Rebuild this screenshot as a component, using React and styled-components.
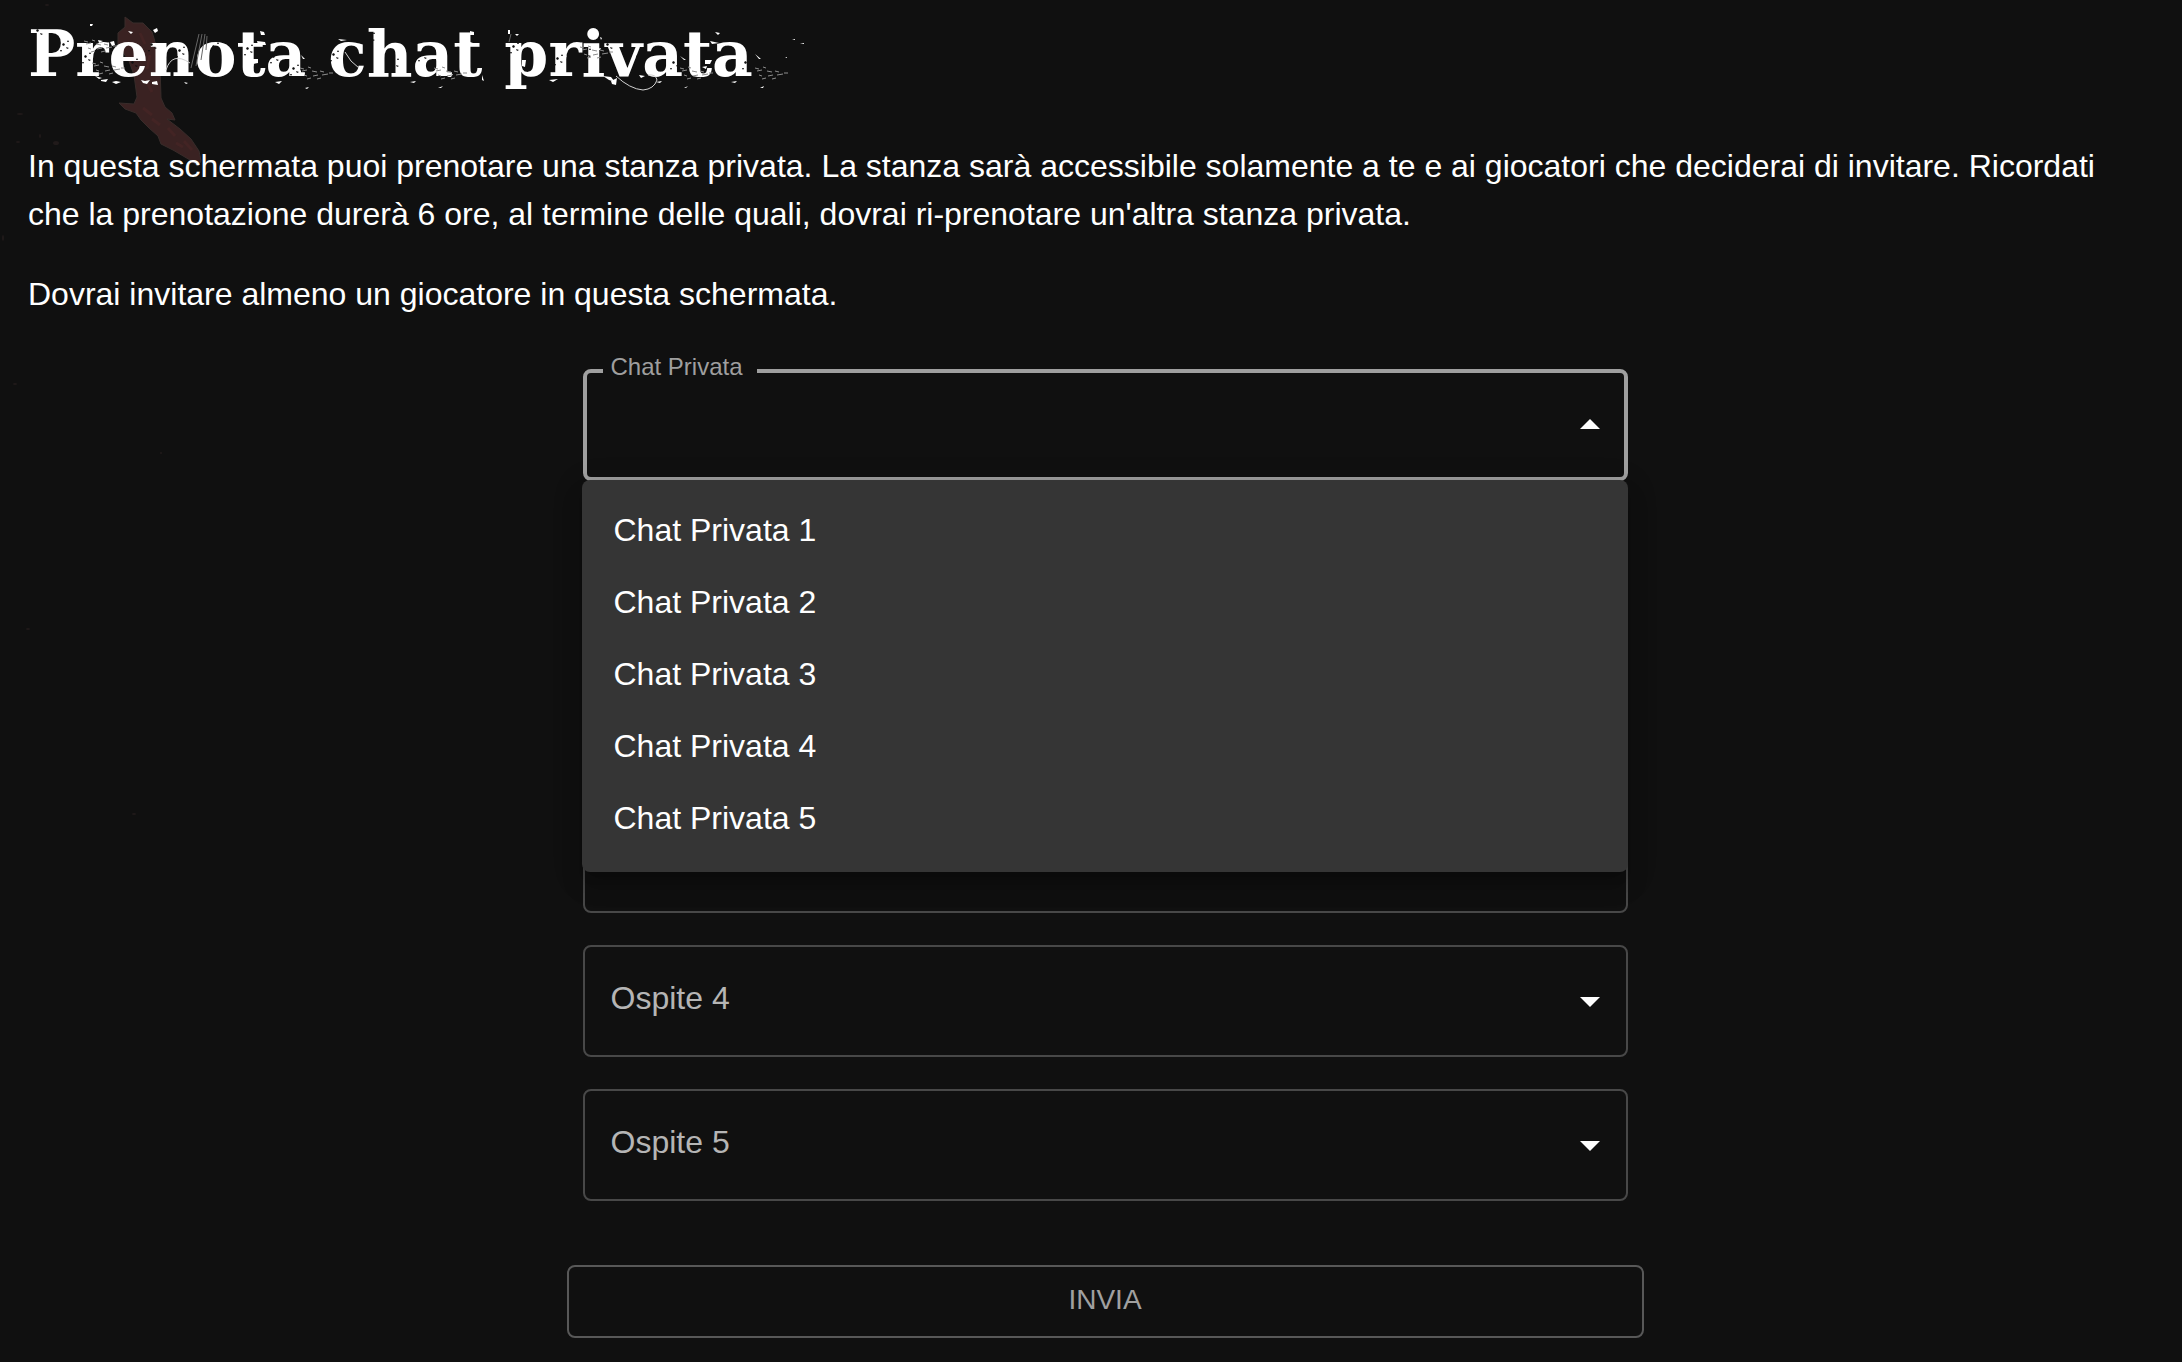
import { useState } from "react";
import styled, { createGlobalStyle, css } from "styled-components";

const GlobalStyle = createGlobalStyle`
  * {
    box-sizing: border-box;
  }
  body {
    margin: 0;
    background: #101010;
    color: #ffffff;
    font-family: "Liberation Sans", Arial, sans-serif;
    font-size: 32px;
    line-height: 48px;
  }
`;

const Page = styled.main`
  position: relative;
  min-height: 100vh;
  padding: 14px 0 23px 28px;
`;

const Backdrop = styled.svg`
  position: absolute;
  top: 0;
  left: 0;
  z-index: -1;
`;

const Title = styled.h1`
  margin: 0 0 48px;
  font-family: "DejaVu Serif", "Liberation Serif", serif;
  font-weight: 700;
  font-size: 63px;
  line-height: 80px;
`;

const Splatter = styled.svg`
  position: absolute;
  top: 0;
  left: 0;
  pointer-events: none;
`;

const Text = styled.p`
  margin: 0 28px 32px 0;
`;

const Form = styled.form`
  width: 50%;
  margin: 0 auto;
  padding-top: 19px;
`;

const Fields = styled.div`
  display: flex;
  flex-direction: column;
  gap: 32px;
  padding: 0 16px;
  margin-bottom: 64px;
`;

const Field = styled.div`
  position: relative;
  display: flex;
`;

const Label = styled.label`
  position: absolute;
  left: 28px;
  top: 29px;
  color: #b5b5b5;
  pointer-events: none;
  ${(p) =>
    p.$open &&
    css`
      left: 20px;
      top: -18px;
      padding: 0 14px 0 8px;
      font-size: 24px;
      line-height: 32px;
      color: #9f9f9f;
      background: #101010;
    `}
`;

const Select = styled.select`
  width: 100%;
  height: 112px;
  padding: 0 64px 0 28px;
  appearance: none;
  outline: none;
  border: ${(p) => (p.$open ? "4px solid #9f9f9f" : "2px solid #484848")};
  border-radius: 8px;
  background: transparent;
  color: #ffffff;
  font: inherit;
`;

const Arrow = styled.svg`
  position: absolute;
  right: 14px;
  top: 32px;
  width: 48px;
  height: 48px;
  fill: #ffffff;
  pointer-events: none;
`;

const Menu = styled.ul`
  position: absolute;
  top: 111px;
  left: -1px;
  right: 0;
  z-index: 1;
  margin: 0;
  padding: 16px 0;
  list-style: none;
  border-radius: 8px;
  background: #353535;
  box-shadow:
    0 10px 10px -6px rgba(0, 0, 0, 0.2),
    0 16px 20px 2px rgba(0, 0, 0, 0.14),
    0 6px 28px 4px rgba(0, 0, 0, 0.12);
`;

const MenuItem = styled.li`
  padding: 10px 32px 14px;
  cursor: pointer;
  :hover {
    background: #454545;
  }
`;

const Submit = styled.button`
  display: block;
  width: 100%;
  padding: 10px 30px 13px;
  border: 2px solid #585858;
  border-radius: 8px;
  background: transparent;
  color: #a0a0a0;
  font-family: inherit;
  font-size: 28px;
  line-height: 46px;
  text-transform: uppercase;
  cursor: pointer;
`;

const rooms = [1, 2, 3, 4, 5].map((n) => `Chat Privata ${n}`);
const guests = [1, 2, 3, 4, 5].map((n) => `Ospite ${n}`);

// left edges of the grainy smears under the letters
const smears = [
  [300, 67], [434, 67], [680, 67], [755, 67], [84, 40], [92, 62], [580, 46],
];

// chipped ink, cut out of the letters in the page colour
const chips = [
  [36, 30], [62, 44], [84, 56], [131, 62], [150, 44], [178, 50], [212, 46],
  [246, 48], [272, 56], [292, 68], [332, 54], [368, 36], [392, 62], [420, 54],
  [452, 50], [502, 66], [512, 46], [556, 58], [584, 52], [606, 44], [636, 56],
  [672, 62], [706, 50], [744, 62],
];

function TitleSplatter() {
  return (
    <Splatter width="840" height="100" fill="#ffffff" aria-hidden="true">
      <path d="M90 24h3l-1 2h-2zM128 31l5 1-2 2zM153 30l4-2 1 3-3 2zM98 40l5 1-4 2zM110 42l4-1 1 4-3 1zM95 76l7 2-3 1zM101 80l7-1-2 3-5-1zM112 82l4-1 5 1-5 2zM141 80l4 1 5-1-3 4-4-1zM152 82l5-1 1 4-6-1zM184 82l4 1-2 1zM260 31l4 1 1 3-4 0zM257 41l8 1 1 3-8 0zM252 59l6 0 0 4-5 1zM248 66l6-2-2 6-4-1zM275 82l7-1-3 3zM297 73l4-3 0 4zM301 55l4 4-2 0zM305 88l4-1-2 2zM338 39l9 1-6 1zM410 82l6-1-2 2zM435 57l4 3-2 1zM470 31l4 1 0 3-4 0zM467 41l6 2 5 1-8 0zM461 59l6 0-1 4-5 1zM447 75l6-1-2 3-3 0zM438 88l5-2-2 2zM482 75l2 6-2-1zM508 30l2 0 0 4-2 0zM515 34l4 0-2 2zM522 60l4 0-1 7-3-1zM549 80l9-1-5 3zM558 55l9 1-5 3zM596 49l5-1-1 2zM600 37l2 1-1 2zM603 76l8 1 4 5-6-2zM611 81l6-3-1 7-4-1zM639 75l6 1-4 2zM656 82l6-1-2 2zM680 56l6 4-2 0zM684 88l4-2-2 2zM705 60l7 0-2 4-5 0zM702 67l5-1-1 3zM715 32l5 1-2 2zM710 41l9 2-7 1zM755 54l6 5-2 0zM731 82l6-1-2 2zM760 88l4-2-1 2zM792 39h3v1zM800 43h4v1zM785 57h2v1z" />
      <g stroke="#8c8c8c" fill="none">
        {smears.map(([x, y]) => (
          <path
            key={x}
            transform={`translate(${x} ${y})`}
            d="M0 1l4 1M8 0l3 1M2 4l5-1M12 4l5 1M20 4l4 1M4 8l3 1M13 9l5-1M22 8l6-1M7 12l4-1M17 12l4-1M29 6l4 0"
          />
        ))}
      </g>
      <path
        d="M191 68l8-34M196 66l6-32M201 60l4-26M206 50l1-14M509 42l2-8"
        stroke="#666666"
        fill="none"
      />
      <path
        d="M166 70q6-19 24-7M345 52q5 10 14 16M616 76q14 13 27 14q11-1 14-10q-1-6-9-5"
        stroke="#d0d0d0"
        fill="none"
      />
      <g fill="#101010">
        {chips.map(([x, y]) => (
          <path
            key={x}
            transform={`translate(${x} ${y})`}
            d="M0 0l2-1 1 2-2 1zM4 3l3 1-2 1zM-2 6l2 0-1 2zM6-4l1 2-2 0z"
          />
        ))}
      </g>
    </Splatter>
  );
}

function Raven() {
  return (
    <Backdrop width="320" height="860" aria-hidden="true">
      <path
        d="M125 17L133 23L143 23L152 32L157 48L160 66L161 98L165 107L172 113L175 120L167 119L180 129L191 139L199 151L201 161L198 166L190 160L173 150L161 144L158 136L149 128L141 120L136 113L125 109L119 103L134 104L137 97L134 75L129 61L118 45L118 33L125 27Z"
        fill="#3a2222"
        stroke="#382c2a"
      />
      <path
        d="M140 33l5 11M150 55l-3 14M146 80l6 12M143 108l9 7M152 119l8 6M168 128l7 8M176 143l7 4M184 141l8 9"
        stroke="#432424"
        strokeWidth="3"
        fill="none"
      />
      <g fill="#201a1a">
        <ellipse cx="47" cy="5" rx="2" ry="1" />
        <ellipse cx="18" cy="142" rx="2" ry="1" />
        <ellipse cx="56" cy="143" rx="3" ry="2" />
        <ellipse cx="40" cy="136" rx="1" ry="2" />
        <ellipse cx="20" cy="114" rx="3" ry="1" />
        <ellipse cx="3" cy="238" rx="1" ry="3" />
        <ellipse cx="15" cy="384" rx="2" ry="1" />
        <ellipse cx="161" cy="453" rx="1" ry="1" />
        <ellipse cx="28" cy="629" rx="2" ry="1" />
        <ellipse cx="134" cy="814" rx="2" ry="1" />
      </g>
    </Backdrop>
  );
}

function SelectField({ id, label, options, open, children }) {
  const [value, setValue] = useState("");
  return (
    <Field>
      <Select
        id={id}
        value={value}
        $open={open}
        onChange={(e) => setValue(e.target.value)}
      >
        <option value="" />
        {options?.map((item) => (
          <option key={item}>{item}</option>
        ))}
      </Select>
      {(open || !value) && (
        <Label htmlFor={id} $open={open}>
          {label}
        </Label>
      )}
      <Arrow viewBox="0 0 24 24" aria-hidden="true">
        <path d={open ? "M7 14l5-5 5 5z" : "M7 10l5 5 5-5z"} />
      </Arrow>
      {children}
    </Field>
  );
}

export default function App() {
  const [open, setOpen] = useState(true);

  return (
    <>
      <GlobalStyle />
      <Page>
        <Raven />
        <Title>Prenota chat privata</Title>
        <TitleSplatter />
        <Text>
          In questa schermata puoi prenotare una stanza privata. La stanza sarà
          accessibile solamente a te e ai giocatori che deciderai di invitare.
          Ricordati che la prenotazione durerà 6 ore, al termine delle quali,
          dovrai ri-prenotare un'altra stanza privata.
        </Text>
        <Text>Dovrai invitare almeno un giocatore in questa schermata.</Text>
        <Form onSubmit={(e) => e.preventDefault()}>
          <Fields>
            <SelectField
              id="room"
              label="Chat Privata"
              options={rooms}
              open={open}
            >
              {open && (
                <Menu role="listbox" aria-label="Chat Privata">
                  {rooms.map((item) => (
                    <MenuItem
                      key={item}
                      role="option"
                      onClick={() => setOpen(false)}
                    >
                      {item}
                    </MenuItem>
                  ))}
                </Menu>
              )}
            </SelectField>
            {guests.map((item, index) => (
              <SelectField key={item} id={`guest-${index + 1}`} label={item} />
            ))}
          </Fields>
          <Submit type="submit">Invia</Submit>
        </Form>
      </Page>
    </>
  );
}
